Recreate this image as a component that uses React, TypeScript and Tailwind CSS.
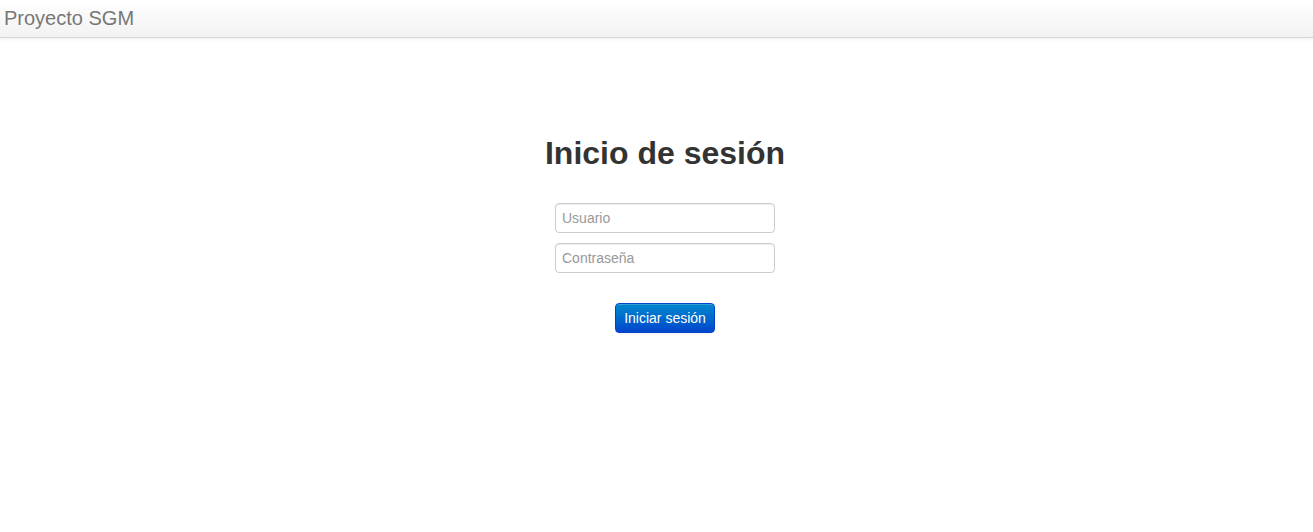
export default function App() {
  return (
    <div className="min-h-[532px] bg-white font-['Liberation_Sans',Arial,sans-serif] text-[14px] text-[#333]">
      {/* Navbar */}
      <div className="h-[38px] border-b border-[#d4d4d4] bg-gradient-to-b from-white to-[#f2f2f2] shadow-[0_1px_4px_rgba(0,0,0,0.065)]">
        <div className="pl-[4px] pt-[6px] text-[20px] leading-[24px] text-[#777]">Proyecto SGM</div>
      </div>

      {/* Login */}
      <div className="flex flex-col items-center pl-[17px] pt-[95px]">
        <h1 className="text-[32px] font-bold leading-[40px] text-[#333]">Inicio de sesión</h1>
        <form className="mt-[30px] flex flex-col items-center" onSubmit={(e) => e.preventDefault()}>
          <input
            type="text"
            placeholder="Usuario"
            className="h-[30px] w-[220px] rounded-[4px] border border-[#ccc] px-[6px] text-[14px] text-[#555] shadow-[inset_0_1px_1px_rgba(0,0,0,0.075)] outline-none placeholder:text-[#999]"
          />
          <input
            type="password"
            placeholder="Contraseña"
            className="mt-[10px] h-[30px] w-[220px] rounded-[4px] border border-[#ccc] px-[6px] text-[14px] text-[#555] shadow-[inset_0_1px_1px_rgba(0,0,0,0.075)] outline-none placeholder:text-[#999]"
          />
          <button
            type="submit"
            className="mt-[30px] h-[30px] w-[100px] rounded-[4px] border border-[#04c] bg-gradient-to-b from-[#08c] to-[#04c] text-[14px] text-white shadow-[inset_0_1px_0_rgba(255,255,255,0.2),0_1px_2px_rgba(0,0,0,0.05)]"
          >
            Iniciar sesión
          </button>
        </form>
      </div>
    </div>
  )
}
